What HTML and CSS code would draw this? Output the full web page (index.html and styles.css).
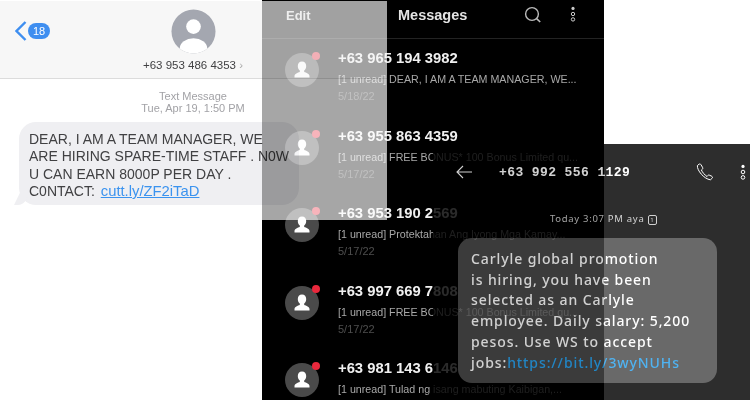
FILE: index.html
```html
<!DOCTYPE html>
<html lang="en">
<head>
  <meta charset="UTF-8" />
  <meta name="viewport" content="width=device-width, initial-scale=1.0" />
  <title>Scam text messages</title>
  <link rel="stylesheet" href="styles.css">
</head>
<body>
  <!-- light phone, bottom of the pile -->
  <section class="shot shot-light">
    <header class="light-head">
      <div class="back">
        <svg class="chevron" width="12" height="20" viewBox="0 0 12 20"><path d="M10.5 1 1.5 10l9 9" fill="none" stroke="#3e8ef0" stroke-width="2.4"/></svg>
        <span class="badge">18</span>
      </div>
      <svg class="light-avatar" width="45" height="45" viewBox="0 0 46 46">
        <defs><clipPath id="round"><circle cx="23" cy="23" r="22.5"/></clipPath></defs>
        <circle cx="23" cy="23" r="22.5" fill="#a4a7b0"/>
        <circle cx="23" cy="18" r="7.500" fill="#fff"/>
        <ellipse cx="23" cy="40" rx="14" ry="10" fill="#fff" clip-path="url(#round)"/>
      </svg>
      <div class="light-number">+63 953 486 4353 <span class="more">›</span></div>
    </header>
    <div class="light-stamp">Text Message<br>Tue, Apr 19, 1:50 PM</div>
    <div class="light-bubble">
      DEAR, I AM A TEAM MANAGER, WE<br>
      ARE HIRING SPARE-TIME STAFF . N0W<br>
      U CAN EARN 8000P PER DAY .<br>
      C0NTACT: <a class="light-link">cutt.ly/ZF2iTaD</a>
    </div>
  </section>

  <!-- dark message list, see-through where it crosses the light phone -->
  <section class="shot shot-list">
    <header class="list-head">
      <span class="edit">Edit</span>
      <span class="list-title">Messages</span>
      <svg class="search" width="18" height="18" viewBox="0 0 18 18"><circle cx="8" cy="8" r="6.400" fill="none" stroke="#bbb" stroke-width="1.400"/><path d="m12.600 12.600 3.600 3.400" stroke="#bbb" stroke-width="1.600"/></svg>
      <svg class="dots" width="6" height="16" viewBox="0 0 6 16"><circle cx="3" cy="2.400" r="1.600" fill="#ccc"/><circle cx="3" cy="8" r="1.700" fill="none" stroke="#ccc"/><circle cx="3" cy="13.400" r="1.700" fill="none" stroke="#ccc"/></svg>
    </header>

    <div class="row">
      <div class="list-avatar"><svg width="20" height="20" viewBox="0 0 20 20"><use href="#person"/></svg></div>
      <div class="row-text">
        <div class="row-name">+63 965 194 3982</div>
        <div class="row-sub">[1 unread] DEAR, I AM A TEAM MANAGER, WE...</div>
        <div class="row-date">5/18/22</div>
      </div>
    </div>
    <div class="row">
      <div class="list-avatar"><svg width="20" height="20" viewBox="0 0 20 20"><use href="#person"/></svg></div>
      <div class="row-text">
        <div class="row-name">+63 955 863 4359</div>
        <div class="row-sub">[1 unread] FREE BONUS* 100 Bonus Limited qu...</div>
        <div class="row-date">5/17/22</div>
      </div>
    </div>
    <div class="row">
      <div class="list-avatar"><svg width="20" height="20" viewBox="0 0 20 20"><use href="#person"/></svg></div>
      <div class="row-text">
        <div class="row-name">+63 953 190 2569</div>
        <div class="row-sub">[1 unread] Protektahan Ang Iyong Mga Kamay...</div>
        <div class="row-date">5/17/22</div>
      </div>
    </div>
    <div class="row">
      <div class="list-avatar"><svg width="20" height="20" viewBox="0 0 20 20"><use href="#person"/></svg></div>
      <div class="row-text">
        <div class="row-name">+63 997 669 7808</div>
        <div class="row-sub">[1 unread] FREE BONUS* 100 Bonus Limited qu...</div>
        <div class="row-date">5/17/22</div>
      </div>
    </div>
    <div class="row">
      <div class="list-avatar"><svg width="20" height="20" viewBox="0 0 20 20"><use href="#person"/></svg></div>
      <div class="row-text">
        <div class="row-name">+63 981 143 6146</div>
        <div class="row-sub">[1 unread] Tulad ng isang mabuting Kaibigan,...</div>
      </div>
    </div>
  </section>

  <!-- dark chat on top -->
  <section class="shot shot-chat">
    <header class="chat-head">
      <svg class="arrow" width="16" height="14" viewBox="0 0 16 14"><path d="M7 1 1 7l6 6M1 7h15" fill="none" stroke="#fff" stroke-width="1.100"/></svg>
      <span class="chat-number">+63 992 556 1129</span>
      <svg class="phone" width="18" height="18" viewBox="0 0 18 18"><path d="M3 1.200 1.400 2.600c-.6 4.600 6.600 13.400 13 14.200l2-1.800c.3-.6-.1-1.500-.9-1.900l-2.300-1c-.6-.2-1.200 0-1.600.6l-.6.8C8.700 12 6.300 9.200 5.400 7l.9-.7c.5-.4.600-1 .4-1.600L5 1.700C4.600 1 3.700.8 3 1.200Z" fill="none" stroke="#fff" stroke-width="1"/></svg>
      <svg class="chat-dots" width="6" height="16" viewBox="0 0 6 16"><circle cx="3" cy="2.400" r="1.600" fill="#fff"/><circle cx="3" cy="8" r="1.800" fill="none" stroke="#fff"/><circle cx="3" cy="13.400" r="1.800" fill="none" stroke="#fff"/></svg>
    </header>
    <div class="chat-stamp">Today 3:07 PM aya <span class="sim">1</span></div>
    <div class="chat-bubble">
      Carlyle global promotion<br>
      is hiring, you have been<br>
      selected as an Carlyle<br>
      employee. Daily salary: 5,200<br>
      pesos. Use WS to accept<br>
      jobs:<a class="chat-link">https://bit.ly/3wyNUHs</a>
    </div>
  </section>

  <svg class="sprites" width="0" height="0">
    <symbol id="person" viewBox="0 0 20 20">
      <path d="M10 1.500c2.700 0 4.200 2 4.200 4.600 0 2-.8 3.500-2 4.500v1.300c2 .7 5.300 1.600 5.300 4.100v1.500H2.500V16c0-2.500 3.300-3.400 5.300-4.100v-1.300c-1.200-1-2-2.500-2-4.500C5.800 3.500 7.300 1.500 10 1.500Z" fill="#fff"/>
    </symbol>
  </svg>
</body>
</html>
```

FILE: styles.css
```css
html, body {
  margin: 0;
  padding: 0;
  width: 750px;
  height: 400px;
  overflow: hidden;
  background: #fff;
  font-family: "Liberation Sans", Arial, sans-serif;
}

.sprites {
  position: absolute;
}

.shot {
  position: absolute;
  box-sizing: border-box;
  filter: blur(0.45px);
}

/* light phone */
.shot-light {
  left: 0;
  top: 1px;
  width: 387px;
  height: 219px;
  background: #fff;
  color: #414143;
}

.light-head {
  position: relative;
  box-sizing: border-box;
  height: 78px;
  padding-top: 8px;
  display: flex;
  flex-direction: column;
  align-items: center;
  background: #f7f7f7;
  border-bottom: 1px solid #dcdcdc;
  padding-right: 1px;
}

.back {
  position: absolute;
  left: 15px;
  top: 20px;
  display: flex;
  align-items: center;
  gap: 1px;
}

.badge {
  width: 22px;
  height: 16px;
  line-height: 16px;
  border-radius: 8px;
  background: #3e8ef0;
  color: #fff;
  font-size: 11px;
  text-align: center;
}

.light-number {
  margin-top: 3px;
  font-size: 11.500px;
  line-height: 16px;
  white-space: nowrap;
}

.more {
  color: #aaa;
}

.light-stamp {
  margin-top: 11px;
  font-size: 11px;
  line-height: 12px;
  text-align: center;
  color: #a2a2a6;
  padding-right: 1px;
}

.light-bubble {
  position: relative;
  box-sizing: border-box;
  width: 280px;
  height: 83px;
  margin: 8px 0 0 19px;
  padding: 8.500px 0 0 10px;
  border-radius: 17px;
  background: #efeff2;
  font-size: 14px;
  line-height: 17.500px;
  white-space: nowrap;
}

.light-bubble::before {
  content: "";
  position: absolute;
  left: -5px;
  bottom: 0;
  width: 14px;
  height: 13px;
  background: #efeff2;
  border-bottom-right-radius: 10px 13px;
  clip-path: polygon(0 100%, 45% 0, 100% 0, 100% 100%);
}

.light-link {
  margin-left: 2px;
  font-size: 14.800px;
  color: #3b93ef;
  text-decoration: underline;
}

/* message list */
.shot-list {
  left: 262px;
  top: 0;
  width: 342px;
  height: 400px;
  background: #000;
  color: #fff;
  overflow: hidden;
  -webkit-mask-image:
    linear-gradient(#000, #000),
    linear-gradient(rgba(0, 0, 0, 0.35), rgba(0, 0, 0, 0.35)),
    linear-gradient(#000, #000),
    linear-gradient(#000, #000);
  -webkit-mask-size: 125px 1px, 125px 219px, 217px 400px, 125px 180px;
  -webkit-mask-position: 0 0, 0 1px, 125px 0, 0 220px;
  -webkit-mask-repeat: no-repeat;
}

.list-head {
  position: relative;
  box-sizing: border-box;
  height: 39px;
  border-bottom: 1px solid #232323;
  font-weight: 700;
}

.edit {
  position: absolute;
  left: 24px;
  top: 8px;
  font-size: 13px;
  color: #dcdcdc;
}

.list-title {
  position: absolute;
  left: 136px;
  top: 7px;
  font-size: 14.500px;
  color: #e4e4e4;
}

.search {
  position: absolute;
  left: 262px;
  top: 6px;
}

.dots {
  position: absolute;
  left: 308px;
  top: 6px;
}

.row {
  display: flex;
  height: 77.500px;
  padding: 14px 0 0 23px;
  box-sizing: border-box;
  gap: 19px;
}

.list-avatar {
  position: relative;
  flex: none;
  width: 34px;
  height: 34px;
  border-radius: 50%;
  background: #4a4a4a;
  display: flex;
  align-items: center;
  justify-content: center;
}

.list-avatar::after {
  content: "";
  position: absolute;
  right: -1px;
  top: -1px;
  width: 8px;
  height: 8px;
  border-radius: 50%;
  background: #e9283c;
}

.row-text {
  margin-top: -5px;
  white-space: nowrap;
}

.row-name {
  font-size: 14.800px;
  font-weight: 700;
  line-height: 20px;
  color: #f0f0f0;
}

.row-sub {
  margin-top: 3px;
  font-size: 10.700px;
  line-height: 16px;
  color: #a8a8a8;
}

.row-date {
  margin-top: 1px;
  font-size: 11px;
  line-height: 16px;
  color: #4e4e4e;
}

/* chat */
.shot-chat {
  left: 433px;
  top: 144px;
  width: 317px;
  height: 256px;
  background: #000;
  color: #fff;
  opacity: 0.82;
  font-family: "Noto Sans", sans-serif;
}

.chat-head {
  position: relative;
  height: 56px;
}

.arrow {
  position: absolute;
  left: 23px;
  top: 21px;
}

.chat-number {
  position: absolute;
  left: 66px;
  top: 21px;
  font-family: "Liberation Mono", monospace;
  font-weight: 700;
  font-size: 13px;
  line-height: 16px;
  letter-spacing: 0.400px;
  white-space: nowrap;
}

.phone {
  position: absolute;
  left: 263px;
  top: 19px;
}

.chat-dots {
  position: absolute;
  left: 307px;
  top: 20px;
}

.chat-stamp {
  margin: 12px 0 0 117px;
  font-size: 9.500px;
  line-height: 14px;
  letter-spacing: 0.700px;
  color: #c8c8c8;
  white-space: nowrap;
}

.sim {
  display: inline-block;
  width: 7px;
  height: 8px;
  line-height: 8px;
  border: 1px solid #c8c8c8;
  border-radius: 2px;
  font-size: 6px;
  letter-spacing: 0;
  text-align: center;
}

.chat-bubble {
  box-sizing: border-box;
  width: 259px;
  height: 145px;
  margin: 12px 0 0 25px;
  padding: 11px 0 0 13px;
  border-radius: 14px;
  background: #494949;
  font-size: 14px;
  font-weight: 500;
  line-height: 20.700px;
  letter-spacing: 0.900px;
  white-space: nowrap;
}

.chat-link {
  color: #29a3f0;
}
```
